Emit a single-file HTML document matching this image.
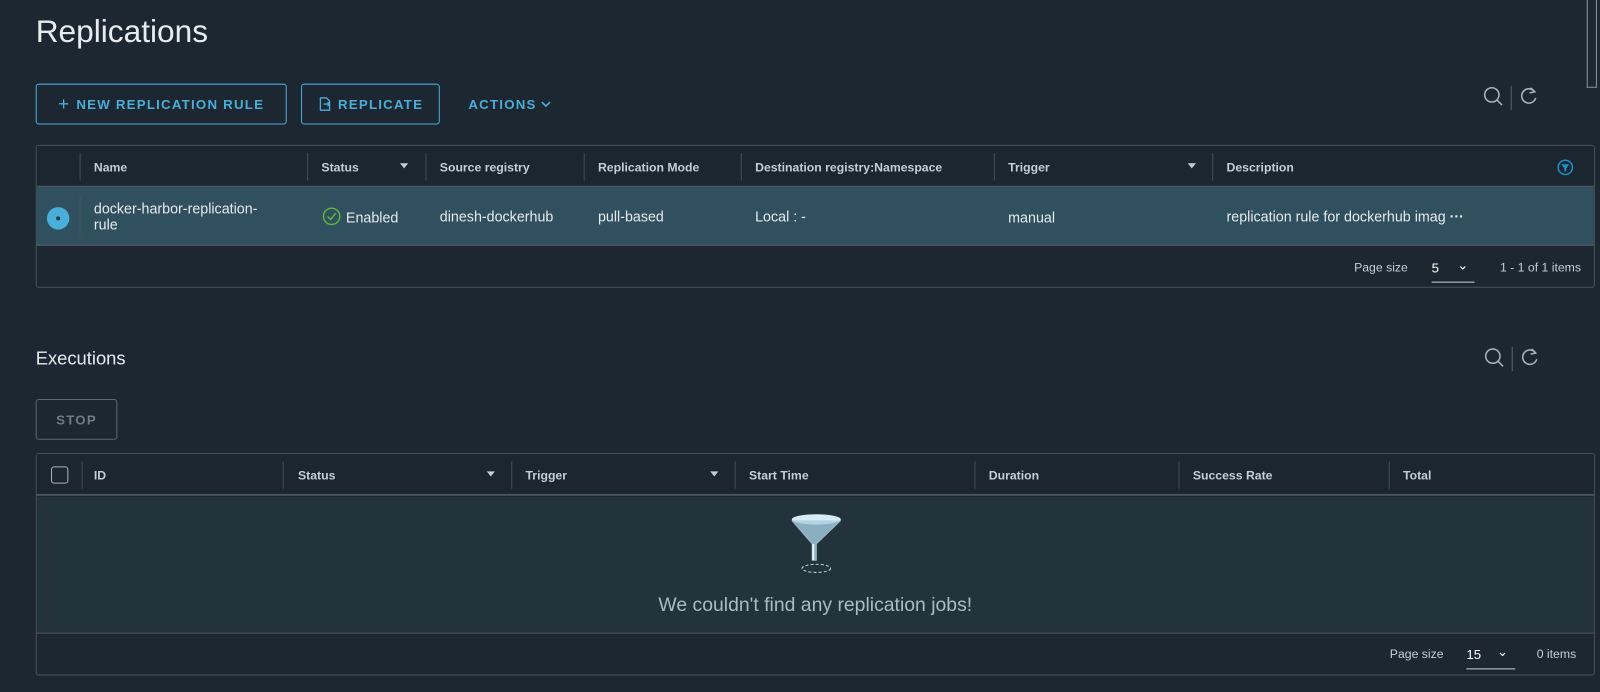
<!DOCTYPE html><html><head><style>
*{box-sizing:border-box;margin:0;padding:0}
body{width:1600px;height:678px;background:#1c2731;font-family:"Liberation Sans",sans-serif;color:#e6eaed;position:relative;overflow:hidden}
#w{position:absolute;left:0;top:0;width:1600px;height:678px;transform:scale(1.0204);transform-origin:0 0}
.a{position:absolute}
.btn{position:absolute;height:40px;border:1px solid #4aaed9;border-radius:3px;color:#4aaed9;font-size:13px;font-weight:bold;letter-spacing:1.2px;display:flex;align-items:center;justify-content:center}
.tbl{position:absolute;left:35px;width:1528px;border:1px solid #44545f;border-radius:3px}
.hd{position:absolute;left:0;right:0;top:0;height:41px;border-bottom:2px solid #44545f;background:#1b2630}
.th{position:absolute;top:14px;font-size:12px;font-weight:bold;color:#c3cfd6}
.sep{position:absolute;top:7px;width:1px;height:27px;background:#3e4d58}
.flt{position:absolute;top:17px;width:0;height:0;border-left:4px solid transparent;border-right:4px solid transparent;border-top:5px solid #c3cfd6}
.td{position:absolute;font-size:14px;color:#e6eaed}
.ft{position:absolute;font-size:12px;color:#c3cfd6}
</style></head><body><div id="w">
<div class="a" style="left:35px;top:13px;font-size:31px;font-weight:300;color:#e9ecef">Replications</div>
<div class="a" style="left:1555px;top:0;width:10px;height:86px;border:1px solid #8a949a;border-top:none"></div>
<div class="btn" style="left:35px;top:82px;width:246px"><span style="font-size:18px;font-weight:normal;margin-right:6px">+</span>NEW REPLICATION RULE</div>
<div class="btn" style="left:295px;top:82px;width:136px"><svg width="14" height="14" viewBox="0 0 14 14" style="margin-right:6px"><path d="M3 1h6l3 3v9H3z M6 7h6 M10 5l2 2-2 2" fill="none" stroke="#4aaed9" stroke-width="1.3"/></svg>REPLICATE</div>
<div class="a" style="left:459px;top:95px;font-size:13px;font-weight:bold;letter-spacing:1.2px;color:#4aaed9">ACTIONS<svg width="12" height="10" viewBox="0 0 12 10" style="margin-left:3px"><path d="M2 3l4 4 4-4" fill="none" stroke="#4aaed9" stroke-width="1.6"/></svg></div>
<svg class="a" style="left:1452px;top:82px" width="60" height="26"><circle cx="10" cy="11" r="7" fill="none" stroke="#aab4ba" stroke-width="1.5"/><path d="M15 16l5 5" stroke="#aab4ba" stroke-width="1.5"/><path d="M29 2v24" stroke="#55636d"/><path d="M52 8a7 7 0 1 0 1 6" fill="none" stroke="#aab4ba" stroke-width="1.5"/><path d="M48 4l4 4-5 1" fill="none" stroke="#aab4ba" stroke-width="1.5"/></svg>

<div class="tbl" style="top:142px;height:140px">
<div class="hd">
<div class="sep" style="left:42px"></div>
<div class="th" style="left:56px">Name</div><div class="sep" style="left:265px"></div>
<div class="th" style="left:279px">Status</div><div class="flt" style="left:356px"></div><div class="sep" style="left:381px"></div>
<div class="th" style="left:395px">Source registry</div><div class="sep" style="left:536px"></div>
<div class="th" style="left:550px">Replication Mode</div><div class="sep" style="left:690px"></div>
<div class="th" style="left:704px">Destination registry:Namespace</div><div class="sep" style="left:938px"></div>
<div class="th" style="left:952px">Trigger</div><div class="flt" style="left:1128px"></div><div class="sep" style="left:1152px"></div>
<div class="th" style="left:1166px">Description</div>
<svg class="a" style="left:1490px;top:13px" width="16" height="16"><circle cx="8" cy="8" r="7" fill="none" stroke="#1e8fc6" stroke-width="1.5"/><path d="M4 5h8l-3 4v3H7V9z" fill="#1e8fc6"/></svg>
</div>
<div class="a" style="left:0;right:0;top:41px;height:57px;background:#31505f;border-bottom:2px solid #44545f">
<div class="a" style="left:10px;top:19px;width:22px;height:22px;border-radius:50%;background:#49afd9"><div class="a" style="left:9px;top:9px;width:4px;height:4px;border-radius:50%;background:#1b3c4e"></div></div>
<div class="sep" style="left:42px;top:8px;height:42px;background:#3e5566"></div>
<div class="td" style="left:56px;top:12px;line-height:16px">docker-harbor-replication-<br>rule</div>
<svg class="a" style="left:279px;top:18px" width="20" height="20"><circle cx="10" cy="10" r="8" fill="none" stroke="#5fb83a" stroke-width="1.4"/><path d="M6 10l3 3 5-6" fill="none" stroke="#5fb83a" stroke-width="1.4"/></svg>
<div class="td" style="left:303px;top:21px">Enabled</div>
<div class="td" style="left:395px;top:20px">dinesh-dockerhub</div>
<div class="td" style="left:550px;top:20px">pull-based</div>
<div class="td" style="left:704px;top:20px">Local : -</div>
<div class="td" style="left:952px;top:21px">manual</div>
<div class="td" style="left:1166px;top:20px">replication rule for dockerhub imag <b>···</b></div>
</div>
<div class="ft" style="left:1291px;top:112px">Page size</div>
<div class="ft" style="left:1367px;top:112px;width:42px;height:22px;border-bottom:1px solid #c3cfd6;color:#fff;font-size:13px">5<span style="position:absolute;left:25px;top:-3px">&#8964;</span></div>
<div class="ft" style="left:1434px;top:112px">1 - 1 of 1 items</div>
</div>

<div class="a" style="left:35px;top:341px;font-size:18px;color:#e9ecef">Executions</div>
<svg class="a" style="left:1452px;top:338px" width="60" height="26"><circle cx="11" cy="11" r="7" fill="none" stroke="#aab4ba" stroke-width="1.5"/><path d="M16 16l5 5" stroke="#aab4ba" stroke-width="1.5"/><path d="M30 2v24" stroke="#55636d"/><path d="M53 8a7 7 0 1 0 1 6" fill="none" stroke="#aab4ba" stroke-width="1.5"/><path d="M49 4l4 4-5 1" fill="none" stroke="#aab4ba" stroke-width="1.5"/></svg>
<div class="btn" style="left:35px;top:391px;width:80px;border-color:#5a6870;color:#6f7c85">STOP</div>

<div class="tbl" style="top:444px;height:218px">
<div class="hd">
<div class="a" style="left:14px;top:12px;width:17px;height:17px;border:1.5px solid #aab4ba;border-radius:3px"></div>
<div class="sep" style="left:44px"></div>
<div class="th" style="left:56px">ID</div><div class="sep" style="left:241px"></div>
<div class="th" style="left:256px">Status</div><div class="flt" style="left:441px"></div><div class="sep" style="left:465px"></div>
<div class="th" style="left:479px">Trigger</div><div class="flt" style="left:660px"></div><div class="sep" style="left:684px"></div>
<div class="th" style="left:698px">Start Time</div><div class="sep" style="left:919px"></div>
<div class="th" style="left:933px">Duration</div><div class="sep" style="left:1119px"></div>
<div class="th" style="left:1133px">Success Rate</div><div class="sep" style="left:1325px"></div>
<div class="th" style="left:1339px">Total</div>
</div>
<div class="a" style="left:0;right:0;top:42px;height:134px;background:#22333c;border-bottom:1px solid #44545f">
<svg class="a" style="left:736px;top:16px" width="56" height="60"><ellipse cx="28" cy="6" rx="24" ry="5" fill="#d8ecf5"/><path d="M4 7L24 30v16h4V30L52 7" fill="#a7cfe2" opacity=".8" stroke="#b8dcec"/><path d="M25 30v16" stroke="#e4f2f8" stroke-width="2"/><ellipse cx="28" cy="54" rx="14" ry="4" fill="none" stroke="#c3cfd6" stroke-dasharray="3 2"/></svg>
<div class="a" style="left:0;right:0;top:96px;text-align:center;font-size:19px;color:#adbac3">We couldn't find any replication jobs!</div>
</div>
<div class="ft" style="left:1326px;top:189px">Page size</div>
<div class="ft" style="left:1401px;top:189px;width:48px;height:22px;border-bottom:1px solid #c3cfd6;color:#fff;font-size:13px">15<span style="position:absolute;left:30px;top:-3px">&#8964;</span></div>
<div class="ft" style="left:1470px;top:189px">0 items</div>
</div>
</div></body></html>
